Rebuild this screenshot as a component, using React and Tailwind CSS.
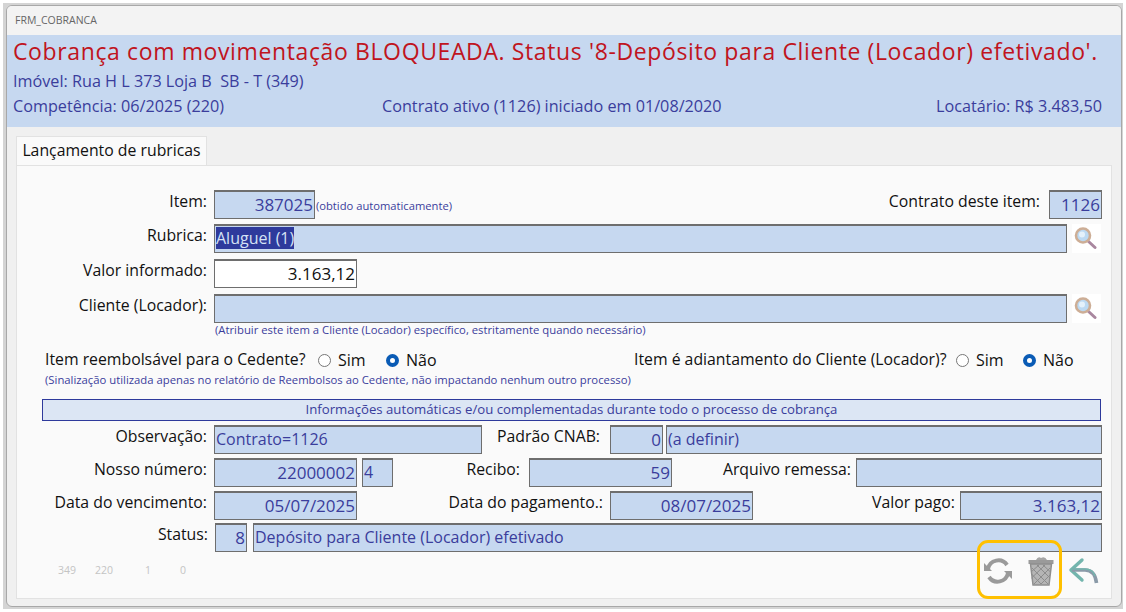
import { Fragment } from "react";

const font = { fontFamily: '"Open Sans", "Noto Sans", sans-serif' };

function Label({ width, children, className = "" }) {
  return (
    <label className={`shrink-0 whitespace-nowrap text-right text-[15.8px] leading-[22px] text-[#111] ${className}`} style={{ width }}>
      {children}
    </label>
  );
}

function Field({ width, right, white, children, className = "" }) {
  return (
    <div
      className={`h-[29px] shrink-0 overflow-hidden whitespace-nowrap border border-t-2 border-[#6e6e6e] px-[1px] leading-[25px] ${
        white ? "bg-white text-[#111]" : "bg-[#c6d8f0] text-[#3a3d9c]"
      } ${right ? "text-right text-[17px]" : "text-left text-[16px]"} ${className}`}
      style={{ width }}
    >
      {children}
    </div>
  );
}

function Lupa() {
  return (
    <div className="ml-[5px] flex h-[29px] w-[29px] shrink-0 items-center justify-center bg-white">
      <svg width="24" height="24" viewBox="0 0 24 24" className="-ml-[3px] -mt-[2px]">
        <line x1="15" y1="15" x2="22" y2="21.5" stroke="#a9879f" strokeWidth="3" strokeLinecap="round" />
        <circle cx="10" cy="9.5" r="7" fill="#bcd9f2" stroke="#cdae96" strokeWidth="2.6" />
        <circle cx="9" cy="8.5" r="3" fill="#e4f1fb" />
      </svg>
    </div>
  );
}

function Radio({ checked }) {
  return checked ? (
    <span className="inline-block h-[13px] w-[13px] rounded-full border-[4px] border-[#0a5bb5] bg-white" />
  ) : (
    <span className="inline-block h-[13px] w-[13px] rounded-full border border-[#777] bg-white" />
  );
}

function RadioPair({ simWidth }) {
  return (
    <Fragment>
      <Radio />
      <span className="ml-[7px] text-[16px] text-[#111]" style={{ width: simWidth }}>Sim</span>
      <Radio checked />
      <span className="ml-[7px] text-[16px] text-[#111]">Não</span>
    </Fragment>
  );
}

function SyncIcon() {
  return (
    <svg width="30" height="30" viewBox="0 0 30 30" fill="none">
      <path d="M5 13 A10.5 10.5 0 0 1 24 9" stroke="#9a9a9a" strokeWidth="4" />
      <path d="M25 17 A10.5 10.5 0 0 1 6 21" stroke="#9a9a9a" strokeWidth="4" />
      <path d="M1 7 L9 15 L1 15 Z" fill="#9a9a9a" />
      <path d="M29 23 L21 15 L29 15 Z" fill="#9a9a9a" />
    </svg>
  );
}

function TrashIcon() {
  return (
    <svg width="28" height="30" viewBox="0 0 28 30" fill="none">
      <path d="M9 4 Q11 0 14 2 Q18 0 20 4 Z" fill="#a5a5a5" />
      <rect x="1.5" y="4" width="25" height="4" fill="#9a9a9a" />
      <path d="M3.5 8 L6 29 L22 29 L24.5 8 Z" fill="#b5b5b5" stroke="#8f8f8f" strokeWidth="1.5" />
      <path d="M5 12 L21 28 M10 9 L23 22 M16 9 L23.5 16 M4.5 18 L14 28 M23 12 L7 28 M18 9 L4.5 22 M12 9 L4 16 M23 19 L14 28" stroke="#8c8c8c" strokeWidth="1" />
    </svg>
  );
}

function BackIcon() {
  return (
    <svg width="32" height="30" viewBox="0 0 32 30" fill="none">
      <path d="M3 14 L14 4 M3 14 L14 24" stroke="#73b5ad" strokeWidth="3.4" strokeLinecap="round" />
      <path d="M4 14 H17 Q27 14 28.5 27" stroke="#8a9aa8" strokeWidth="3.6" />
      <path d="M4 13 H17 Q25 13 27 20" stroke="#73b5ad" strokeWidth="1.4" />
    </svg>
  );
}

export default function App() {
  return (
    <div className="h-[612px] w-[1126px] overflow-hidden bg-white pl-[3px] pt-[3px]" style={font}>
      <div className="h-[606px] w-[1120px] bg-[#d4d4d4] pl-[3px] pt-[2px] pr-[1px]">
        <div className="flex h-[602px] flex-col overflow-hidden rounded-[6px] border border-[#a8a8a8] bg-[#f0f0f0]">
          {/* titulo */}
          <div className="flex h-[29px] shrink-0 items-center bg-[#f3f3f3] pl-[8px] text-[10.5px] text-[#666]">FRM_COBRANCA</div>

          {/* cabecalho */}
          <div className="h-[92px] shrink-0 bg-[#c6d8f0] pl-[6px] pr-[19px]">
            <div className="whitespace-nowrap pt-[1px] text-[23px] leading-[31px] tracking-[0.62px] text-[#c01420]">
              Cobrança com movimentação BLOQUEADA. Status '8-Depósito para Cliente (Locador) efetivado'.
            </div>
            <div className="mt-[2px] text-[16.2px] leading-[24px] text-[#3a3d9c]">Imóvel: Rua H L 373 Loja B&nbsp; SB - T (349)</div>
            <div className="mt-[1px] flex text-[16.2px] leading-[24px] text-[#3a3d9c]">
              <span className="w-[369px]">Competência: 06/2025 (220)</span>
              <span className="flex-1">Contrato ativo (1126) iniciado em 01/08/2020</span>
              <span>Locatário: R$ 3.483,50</span>
            </div>
          </div>

          {/* aba */}
          <div className="flex-1 px-[9px] pt-[9px] pb-[5px]">
            <div className="flex h-[29px] w-[191px] items-center justify-center whitespace-nowrap border border-b-0 border-[#e2e2e2] bg-[#fafafa] text-[15.8px] text-[#111]">
              Lançamento de rubricas
            </div>
            <div className="relative h-[434px] border border-[#e2e2e2] bg-[#fafafa] pt-[24px]">
              <div className="flex items-start">
                <Label width={190}>Item:</Label>
                <Field width={101} right className="ml-[7px]">387025</Field>
                <span className="ml-[1px] mt-[9px] text-[11.2px] leading-[14px] text-[#3a3d9c]">(obtido automaticamente)</span>
                <Label width={160} className="ml-auto">Contrato deste item:</Label>
                <Field width={53} right className="ml-[9px] mr-[9px]">1126</Field>
              </div>
              <div className="mt-[5px] flex items-start">
                <Label width={190}>Rubrica:</Label>
                <Field width={853} className="ml-[7px]">
                  <span className="bg-[#2e3a9c] text-[#d5e2f5]">Aluguel (1)</span>
                </Field>
                <Lupa />
              </div>
              <div className="mt-[6px] flex items-start">
                <Label width={190}>Valor informado:</Label>
                <Field width={143} right white className="ml-[7px] border-t">3.163,12</Field>
              </div>
              <div className="mt-[6px] flex items-start">
                <Label width={190}>Cliente (Locador):</Label>
                <Field width={853} className="ml-[7px]" />
                <Lupa />
              </div>
              <div className="ml-[198px] mt-[-1px] whitespace-nowrap text-[11.3px] leading-[15px] text-[#3a3d9c]">
                (Atribuir este item a Cliente (Locador) específico, estritamente quando necessário)
              </div>

              <div className="mt-[12px] flex h-[22px] items-center text-[15.8px] text-[#111]">
                <span className="ml-[28px] w-[273px] whitespace-nowrap">Item reembolsável para o Cedente?</span>
                <div className="flex w-[316px] items-center">
                  <RadioPair simWidth={48} />
                </div>
                <span className="w-[322px] whitespace-nowrap">Item é adiantamento do Cliente (Locador)?</span>
                <RadioPair simWidth={47} />
              </div>
              <div className="ml-[28px] mt-[1px] whitespace-nowrap text-[11.3px] leading-[15px] text-[#3a3d9c]">
                (Sinalização utilizada apenas no relatório de Reembolsos ao Cedente, não impactando nenhum outro processo)
              </div>

              <div className="ml-[25px] mr-[10px] mt-[12px] flex h-[22px] items-center justify-center whitespace-nowrap border border-[#2e3a9c] bg-[#dce6f4] text-[13.2px] text-[#3a3d9c]">
                Informações automáticas e/ou complementadas durante todo o processo de cobrança
              </div>

              <div className="mt-[4px] flex items-start">
                <Label width={190}>Observação:</Label>
                <Field width={268} className="ml-[7px]">Contrato=1126</Field>
                <Label width={118}>Padrão CNAB:</Label>
                <Field width={53} right className="ml-[10px]">0</Field>
                <Field width={436} className="ml-[3px]">(a definir)</Field>
              </div>
              <div className="mt-[4px] flex items-start">
                <Label width={190}>Nosso número:</Label>
                <Field width={143} right className="ml-[7px]">22000002</Field>
                <Field width={31} className="ml-[5px]">4</Field>
                <Label width={127}>Recibo:</Label>
                <Field width={143} right className="ml-[9px]">59</Field>
                <Label width={179}>Arquivo remessa:</Label>
                <Field width={246} className="ml-[5px]" />
              </div>
              <div className="mt-[4px] flex items-start">
                <Label width={190}>Data do vencimento:</Label>
                <Field width={143} right className="ml-[7px]">05/07/2025</Field>
                <Label width={246}>Data do pagamento.:</Label>
                <Field width={143} right className="ml-[7px]">08/07/2025</Field>
                <Label width={202}>Valor pago:</Label>
                <Field width={142} right className="ml-[5px]">3.163,12</Field>
              </div>
              <div className="mt-[3px] flex items-start">
                <Label width={191}>Status:</Label>
                <Field width={32} right className="ml-[7px]">8</Field>
                <Field width={849} className="ml-[6px]">Depósito para Cliente (Locador) efetivado</Field>
              </div>

              <div className="mt-[4px] flex items-center">
                <div className="flex pl-[41px] text-[10.5px] text-[#c4c4c4]">
                  <span className="w-[37px]">349</span>
                  <span className="w-[50px]">220</span>
                  <span className="w-[35px]">1</span>
                  <span>0</span>
                </div>
                <div className="ml-auto mr-[11px] flex items-center">
                  <SyncIcon />
                  <div className="ml-[14px]"><TrashIcon /></div>
                  <div className="ml-[13px]"><BackIcon /></div>
                </div>
              </div>

              {/* destaque */}
              <div className="absolute left-[960px] top-[374px] h-[59px] w-[85px] rounded-[11px] border-[3px] border-[#ffc000]" />
            </div>
          </div>
        </div>
      </div>
    </div>
  );
}
